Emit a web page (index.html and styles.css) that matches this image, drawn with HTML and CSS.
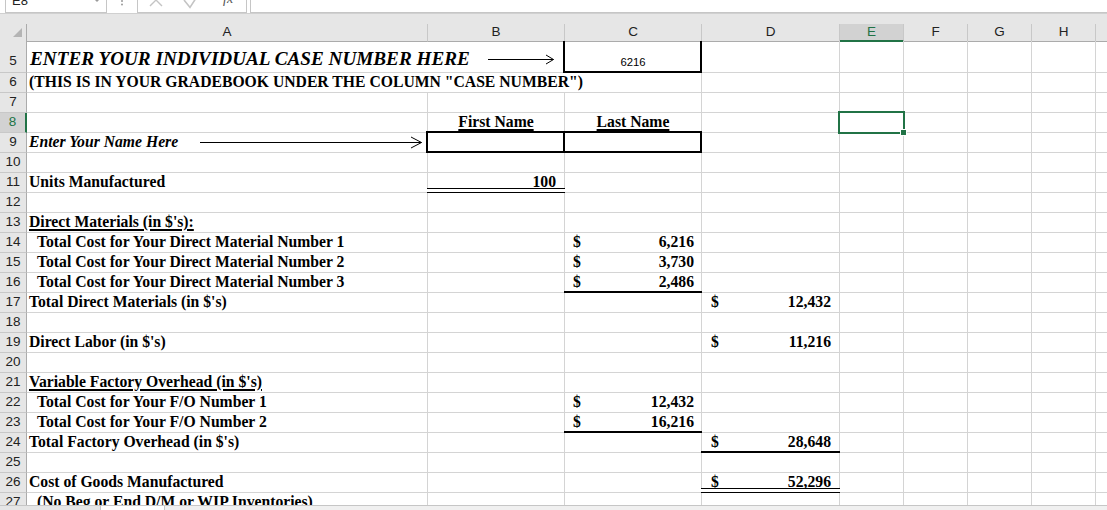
FILE: index.html
```html
<!DOCTYPE html>
<html>
<head>
<meta charset="utf-8">
<link rel="stylesheet" href="styles.css">
</head>
<body>
<div class="fbar">
  <div class="fin">
    <div class="namebox">E8<svg class="dd" width="6" height="4" viewBox="0 0 6 4"><polygon points="0,0 6,0 3,3" fill="#9a9a9a"/></svg></div>
    <svg class="dots" width="4" height="24" viewBox="0 0 4 24"><circle cx="2" cy="8.5" r="1" fill="#9a9a9a"/><circle cx="2" cy="12" r="1" fill="#9a9a9a"/><circle cx="2" cy="15.5" r="1" fill="#9a9a9a"/></svg>
    <div class="fbtns">
      <svg class="ico" width="108" height="22" viewBox="0 0 108 22"><path d="M12 4 L24 16 M24 4 L12 16" stroke="#c4c4c4" stroke-width="1.4" fill="none"/><path d="M46 10 L52 17.5 L60 5" stroke="#c4c4c4" stroke-width="1.6" fill="none"/></svg>
      <span class="fx">fx</span>
    </div>
    <div class="finput"></div>
  </div>
</div>
<div class="fsep"></div>
<div class="hdr">
  <div class="hrow">
    <span class="corner"><svg width="10" height="10" viewBox="0 0 10 10"><polygon points="9,0 9,9 0,9" fill="#b4b4b4"/></svg></span>
    <span>A</span><span>B</span><span>C</span><span>D</span><span class="sel">E</span><span>F</span><span>G</span><span>H</span><span></span>
  </div>
</div>
<div class="sheet">
  <div class="row tall"><span class="rh">5</span><span class="s2 big">ENTER YOUR INDIVIDUAL CASE NUMBER HERE</span><span class="case bx">6216</span><span></span><span></span><span></span><span></span><span></span><span></span></div>
  <div class="row"><span class="rh">6</span><span class="s3">(THIS IS IN YOUR GRADEBOOK UNDER THE COLUMN "CASE NUMBER")</span><span></span><span></span><span></span><span></span><span></span><span></span></div>
  <div class="row"><span class="rh">7</span><span></span><span></span><span></span><span></span><span></span><span></span><span></span><span></span><span></span></div>
  <div class="row"><span class="rh sel">8</span><span></span><span class="ctr u">First Name</span><span class="ctr u">Last Name</span><span></span><span class="cur"><span class="selbox"><span class="handle"></span></span></span><span></span><span></span><span></span><span></span></div>
  <div class="row"><span class="rh">9</span><span class="i">Enter Your Name Here</span><span class="bx"></span><span class="bx"></span><span></span><span></span><span></span><span></span><span></span><span></span></div>
  <div class="row"><span class="rh">10</span><span></span><span></span><span></span><span></span><span></span><span></span><span></span><span></span><span></span></div>
  <div class="row"><span class="rh">11</span><span>Units Manufactured</span><span class="rt bd">100</span><span></span><span></span><span></span><span></span><span></span><span></span><span></span></div>
  <div class="row"><span class="rh">12</span><span></span><span></span><span></span><span></span><span></span><span></span><span></span><span></span><span></span></div>
  <div class="row"><span class="rh">13</span><span class="u">Direct Materials (in $'s):</span><span></span><span></span><span></span><span></span><span></span><span></span><span></span><span></span></div>
  <div class="row"><span class="rh">14</span><span class="in">Total Cost for Your Direct Material Number 1</span><span></span><span class="n"><b>$</b><b>6,216</b></span><span></span><span></span><span></span><span></span><span></span><span></span></div>
  <div class="row"><span class="rh">15</span><span class="in">Total Cost for Your Direct Material Number 2</span><span></span><span class="n"><b>$</b><b>3,730</b></span><span></span><span></span><span></span><span></span><span></span><span></span></div>
  <div class="row"><span class="rh">16</span><span class="in">Total Cost for Your Direct Material Number 3</span><span></span><span class="n bb"><b>$</b><b>2,486</b></span><span></span><span></span><span></span><span></span><span></span><span></span></div>
  <div class="row"><span class="rh">17</span><span>Total Direct Materials (in $'s)</span><span></span><span></span><span class="n nd"><b>$</b><b>12,432</b></span><span></span><span></span><span></span><span></span><span></span></div>
  <div class="row"><span class="rh">18</span><span></span><span></span><span></span><span></span><span></span><span></span><span></span><span></span><span></span></div>
  <div class="row"><span class="rh">19</span><span>Direct Labor (in $'s)</span><span></span><span></span><span class="n nd"><b>$</b><b>11,216</b></span><span></span><span></span><span></span><span></span><span></span></div>
  <div class="row"><span class="rh">20</span><span></span><span></span><span></span><span></span><span></span><span></span><span></span><span></span><span></span></div>
  <div class="row"><span class="rh">21</span><span class="u">Variable Factory Overhead (in $'s)</span><span></span><span></span><span></span><span></span><span></span><span></span><span></span><span></span></div>
  <div class="row"><span class="rh">22</span><span class="in">Total Cost for Your F/O Number 1</span><span></span><span class="n"><b>$</b><b>12,432</b></span><span></span><span></span><span></span><span></span><span></span><span></span></div>
  <div class="row"><span class="rh">23</span><span class="in">Total Cost for Your F/O Number 2</span><span></span><span class="n bb"><b>$</b><b>16,216</b></span><span></span><span></span><span></span><span></span><span></span><span></span></div>
  <div class="row"><span class="rh">24</span><span>Total Factory Overhead (in $'s)</span><span></span><span></span><span class="n nd bb"><b>$</b><b>28,648</b></span><span></span><span></span><span></span><span></span><span></span></div>
  <div class="row"><span class="rh">25</span><span></span><span></span><span></span><span></span><span></span><span></span><span></span><span></span><span></span></div>
  <div class="row"><span class="rh">26</span><span>Cost of Goods Manufactured</span><span></span><span></span><span class="n nd bd"><b>$</b><b>52,296</b></span><span></span><span></span><span></span><span></span><span></span></div>
  <div class="row"><span class="rh">27</span><span class="in">(No Beg or End D/M or WIP Inventories)</span><span></span><span></span><span></span><span></span><span></span><span></span><span></span><span></span></div>
  <svg class="arrows" width="1107" height="464" viewBox="0 0 1107 464">
    <path d="M488 18.5 H553.5 M546 14 L553.5 18.5 L546 23" stroke="#000" stroke-width="1" fill="none"/>
    <path d="M200 101.5 H421.5 M411 96 L421.5 101.5 L411 107" stroke="#000" stroke-width="1" fill="none"/>
  </svg>
</div>
<div class="tabs"><span class="tabl"></span><span class="tab"></span></div>
</body>
</html>
```
FILE: styles.css
```css
* { box-sizing: border-box; margin: 0; padding: 0; }
html, body { width: 1107px; height: 510px; overflow: hidden; background: #fff; }
body {
  display: flex;
  flex-direction: column;
  font-family: "Liberation Sans", Arial, sans-serif;
  --cols: 27px 401px 137px 137px 138px 64px 64px 64px 64px 11px;
}

/* formula bar (top cut off) */
.fbar { height: 13px; overflow: hidden; background: #fff; flex: none; }
.fin { display: flex; height: 24px; margin-top: -11px; }
.namebox {
  position: relative;
  margin-left: 5px;
  width: 102px;
  border: 1px solid #c6c6c6;
  padding-left: 6px;
  font-size: 13px;
  line-height: 22px;
  color: #222;
}
.dd { position: absolute; left: 88px; top: 9px; }
.dots { margin-left: 13px; }
.fbtns {
  position: relative;
  margin-left: 13px;
  width: 110px;
  border: 1px solid #c6c6c6;
}
.ico { position: absolute; left: 0; top: 0; }
.fx {
  position: absolute;
  left: 85px;
  top: 2px;
  font-family: "Liberation Serif", serif;
  font-style: italic;
  font-size: 14px;
  line-height: 14px;
  color: #555;
}
.finput { margin-left: 3px; flex: 1; border: 1px solid #c6c6c6; border-right: none; }
.fsep { height: 1px; background: #d0d0d0; flex: none; }

/* column headers */
.hdr { height: 27px; background: #e6e6e6; display: flex; align-items: flex-end; flex: none; }
.hrow { display: grid; grid-template-columns: var(--cols); height: 17px; width: 100%; }
.hrow span {
  border-right: 1px solid #c8c8c8;
  border-bottom: 1px solid #ababab;
  text-align: center;
  font-size: 13.5px;
  line-height: 16px;
  color: #222;
}
.hrow span:last-child { border-right: none; }
.hrow .corner { position: relative; border-right-color: #ababab; }
.corner svg { position: absolute; left: 13px; top: 4px; }
.hrow .sel { background: #d2d2d2; border-bottom: 2px solid #217346; color: #217346; }

/* sheet */
.sheet {
  position: relative;
  flex: 1;
  overflow: hidden;
  font-family: "Liberation Serif", "Times New Roman", serif;
  font-weight: bold;
  font-size: 15.7px;
  color: #000;
}
.row { display: grid; grid-template-columns: var(--cols); height: 20px; }
.row.tall { height: 32px; }
.row > span {
  position: relative;
  display: flex;
  align-items: flex-end;
  min-width: 0;
  white-space: pre;
  line-height: 18px;
  padding-left: 2px;
  padding-bottom: 1px;
  border-right: 1px solid #d4d4d4;
  border-bottom: 1px solid #d4d4d4;
}
.row > span:last-child { border-right: none; }
.row > .rh {
  justify-content: center;
  padding-left: 0;
  background: #e6e6e6;
  border-right-color: #ababab;
  border-bottom-color: #c8c8c8;
  font-family: "Liberation Sans", Arial, sans-serif;
  font-weight: normal;
  font-size: 13.5px;
  color: #222;
}
.row.tall > .rh { padding-bottom: 2px; }
.row > .rh.sel { background: #d2d2d2; border-right: 2px solid #217346; color: #217346; }

.s2 { grid-column: span 2; }
.s3 { grid-column: span 3; }
.row > .big { font-style: italic; font-size: 19.2px; line-height: 22px; padding-bottom: 2px; padding-left: 3px; }
.i { font-style: italic; }
.row > .in { padding-left: 10px; }
.ctr { justify-content: center; }
.row > .ctr { padding-left: 0; }
.u { text-decoration: underline; text-decoration-thickness: 2px; text-underline-offset: 2px; }
.rt { justify-content: flex-end; }
.row > .rt { padding-right: 8px; }
.row > .case {
  justify-content: center;
  padding-left: 0;
  font-family: "Liberation Sans", Arial, sans-serif;
  font-weight: normal;
  font-size: 11.3px;
}
.n { justify-content: space-between; }
.row > .n { padding-left: 8px; padding-right: 7px; }
.row > .nd { padding-left: 9px; padding-right: 8px; }
.n b { font-weight: bold; }

/* cell borders (offsets are from the padding box, so -1 reaches the gridline) */
.bx::after {
  content: "";
  position: absolute;
  top: -2px; left: -2px; right: -1px; bottom: -1px;
  border: 2px solid #000;
}
.bb::after {
  content: "";
  position: absolute;
  left: -1px; right: -1px; bottom: -1px;
  height: 2px;
  background: #000;
}
.bd::after {
  content: "";
  position: absolute;
  left: -1px; right: -1px; bottom: -1px;
  height: 3px;
  border-top: 1px solid #000;
  border-bottom: 1px solid #000;
  background: #fff;
}

/* active cell */
.selbox {
  position: absolute;
  top: -2px; left: -2px; right: -2px; bottom: -2px;
  border: 2px solid #217346;
  z-index: 3;
}
.handle {
  position: absolute;
  right: -4px; bottom: -4px;
  width: 7px; height: 7px;
  background: #217346;
  border: 1px solid #fff;
}

.arrows { position: absolute; left: 0; top: 0; pointer-events: none; z-index: 2; }

/* sheet tab strip */
.tabs { height: 5px; flex: none; display: flex; border-top: 1px solid #c6c6c6; background: #f0f0f0; }
.tabl { width: 100px; background: #e6e6e6; }
.tab { width: 65px; background: #fff; border-left: 1px solid #c6c6c6; border-right: 1px solid #c6c6c6; }
```
